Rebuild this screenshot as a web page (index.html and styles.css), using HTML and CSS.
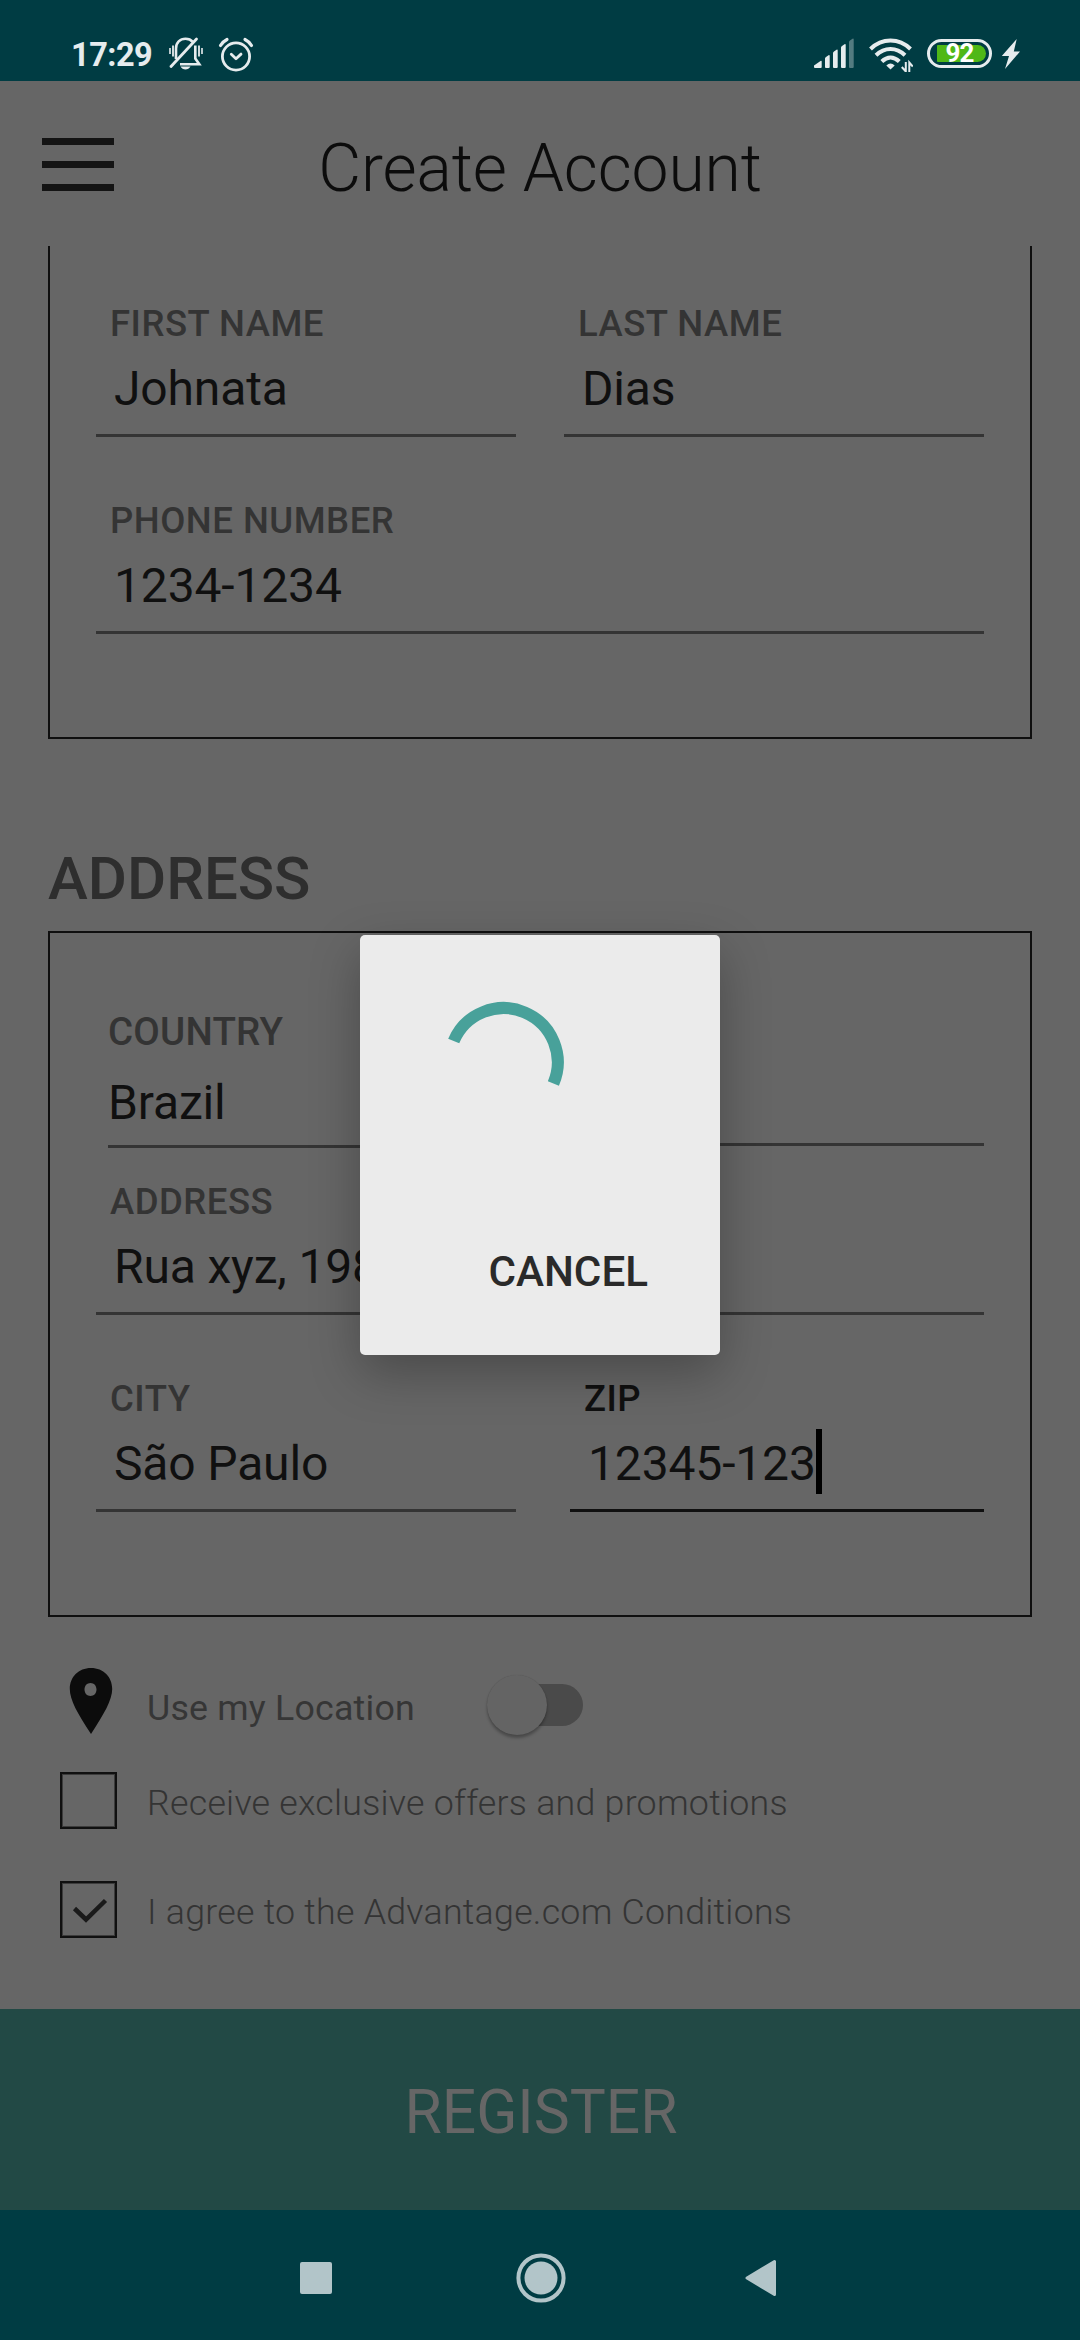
FILE: index.html
```html
<!DOCTYPE html>
<html lang="en">
<head>
<meta charset="utf-8">
<title>Create Account</title>
<link rel="stylesheet" href="styles.css">
</head>
<body>
<div class="screen">
  <header class="status-bar">
    <span class="clock">17:29</span>
    <svg class="icon-bell" width="36" height="34" viewBox="0 0 36 34" fill="none" stroke="#e6ecee" stroke-width="2.6">
      <path d="M8 23V12.500C8 6.500 12 2.800 17.500 2.800c3 0 5.500 1 7.200 3"/>
      <path d="M27.300 9.500v13l4 5.700H12"/>
      <path d="M3 30.500L28.500 3" stroke-width="2.800" stroke-linecap="round"/>
      <path d="M5 9.500v11M31 9.500v11" stroke-width="1.800"/>
      <path d="M2 12v6M34 12v6" stroke-width="1.600"/>
      <path d="M12.500 30.500h10c-1.200 2-3 3-5 3s-4-1-5-3z" fill="#e6ecee" stroke="none"/>
    </svg>
    <svg class="icon-alarm" width="36" height="36" viewBox="0 0 36 36" fill="none" stroke="#e6ecee" stroke-width="2.800" stroke-linecap="round" stroke-linejoin="round">
      <circle cx="18" cy="19.500" r="13.600"/>
      <path d="M13.300 17.300l4.700 4.400 5-4.600"/>
      <path d="M2.500 8.500C4 6 6 4 9 2.500M33.500 8.500C32 6 30 4 27 2.500" stroke-width="3.200"/>
    </svg>
    <svg class="icon-signal" width="41" height="30" viewBox="0 0 41 30" fill="#e6ecee">
      <path d="M1 27.500l6.500-4.500q1.200-.5 1.200.8V29q0 1-1 1H2q-1.500 0-1-2.500z"/>
      <path d="M12 20.500q0-1 1-1.500l2.500-1.800q1.200-.5 1.200.8V29q0 1-1 1H13q-1 0-1-1z"/>
      <path d="M20 15q0-1 1-1.500l2.500-1.800q1.200-.5 1.200.8V29q0 1-1 1H21q-1 0-1-1z"/>
      <path d="M28 9.500q0-1 1-1.500l2.500-1.800q1.200-.5 1.200.8V29q0 1-1 1H29q-1 0-1-1z"/>
      <path d="M36 4q0-1 1-1.500l2.500-1.800q1.200-.5 1.200.8V29q0 1-1 1H37q-1 0-1-1z" opacity=".36"/>
    </svg>
    <svg class="icon-wifi" width="44" height="34" viewBox="0 0 44 34" fill="none" stroke="#e6ecee" stroke-width="4">
      <path d="M1.500 11C13-.3 30-.3 41.500 11"/>
      <path d="M7 17.300c8.500-8.300 20.500-8.300 29 0"/>
      <path d="M12.800 23.500c5.500-5.300 12-5.300 17.500 0"/>
      <path d="M17.300 27.500q4.200-4 8.400 0L21.500 31.500z" fill="#e6ecee" stroke="none"/>
      <path d="M36.800 24v9.500l-4-4.500M40.300 34v-9.500l3.500 4" stroke-width="2"/>
    </svg>
    <div class="battery"><span class="battery-fill">92</span></div>
    <svg class="icon-bolt" width="20" height="32" viewBox="0 0 20 32" fill="#e6ecee">
      <path d="M15.700 1L.8 18h7.200L4 31 19 13.500h-6.200z"/>
    </svg>
  </header>

  <div class="title-bar">
    <div class="hamburger"><i></i><i></i><i></i></div>
    <h1>Create Account</h1>
  </div>

  <main class="form">
    <section class="panel panel-name">
      <div class="row">
        <div class="field"><label>FIRST NAME</label><div class="value">Johnata</div></div>
        <div class="field"><label>LAST NAME</label><div class="value">Dias</div></div>
      </div>
      <div class="row">
        <div class="field"><label>PHONE NUMBER</label><div class="value">1234-1234</div></div>
      </div>
    </section>

    <h2>ADDRESS</h2>
    <section class="panel panel-address">
      <div class="row row-country">
        <div class="field select"><label>COUNTRY</label><div class="value">Brazil</div></div>
        <div class="field empty"></div>
      </div>
      <div class="row">
        <div class="field"><label>ADDRESS</label><div class="value">Rua xyz, 198</div></div>
      </div>
      <div class="row">
        <div class="field"><label>CITY</label><div class="value">São Paulo</div></div>
        <div class="field focused"><label>ZIP</label><div class="value">12345-123<span class="caret"></span></div></div>
      </div>
    </section>

    <section class="options">
      <div class="location">
        <svg class="pin" width="44" height="68" viewBox="0 0 44 68">
          <path fill="#0c0c0c" fill-rule="evenodd" d="M22 0C9.500 0 .8 9 .8 21c0 11 8 25 21.200 45C35 46 43.200 32 43.200 21 43.200 9 34.500 0 22 0zm-.5 15c3.500 0 6 2.800 6 6.500s-2.500 6.500-6 6.500-6-2.800-6-6.500 2.500-6.500 6-6.500z"/>
        </svg>
        <span class="location-text">Use my Location</span>
        <div class="switch"><i class="thumb"></i></div>
      </div>
      <div class="check-row"><i class="box"></i><span class="offers">Receive exclusive offers and promotions</span></div>
      <div class="check-row"><i class="box"><svg width="53" height="53" viewBox="0 0 53 53" fill="none" stroke="#1a1a1a" stroke-width="4.500"><path d="M12.500 25.500L24 36.500 43.500 17.500"/></svg></i><span class="agree">I agree to the Advantage.com Conditions</span></div>
    </section>
  </main>

  <div class="register">REGISTER</div>

  <nav class="nav-bar">
    <svg width="32" height="32" viewBox="0 0 32 32"><rect width="32" height="32" rx="2" fill="#b2c5c9"/></svg>
    <svg class="nav-home" width="50" height="50" viewBox="0 0 50 50"><circle cx="25" cy="25" r="22.600" fill="none" stroke="#b2c5c9" stroke-width="4"/><circle cx="25" cy="25" r="16.500" fill="#b2c5c9"/></svg>
    <svg width="32" height="38" viewBox="0 0 32 38"><path d="M2 19L29.500 2.500v33z" fill="#b2c5c9" stroke="#b2c5c9" stroke-width="3" stroke-linejoin="round"/></svg>
  </nav>

  <div class="overlay">
    <div class="dialog">
      <svg class="spinner" width="120" height="120" viewBox="0 0 120 120" fill="none" stroke="#48a19a" stroke-width="12"><path d="M9.700 40A54 54 0 1 1 109.400 82.500"/></svg>
      <span class="cancel">CANCEL</span>
    </div>
  </div>
</div>
</body>
</html>
```
FILE: styles.css
```css
* { box-sizing: border-box; }
body { margin: 0; font-family: Roboto, sans-serif; background: #666; }
h1, h2 { margin: 0; }
svg { display: block; flex: none; }
.screen { position: relative; width: 1080px; height: 2340px; background: #666; overflow: hidden; display: flex; flex-direction: column; }

.status-bar { height: 81px; flex: none; background: #003c43; display: flex; align-items: flex-start; padding: 36px 59px 0 71px; color: #e6ecee; }
.clock { font-size: 32.500px; line-height: 38px; font-weight: 700; letter-spacing: -.5px; width: 97px; }
.icon-alarm { margin: 1px 0 0 14px; }
.icon-signal { margin: 2px 0 0 auto; }
.icon-wifi { margin: 2px 0 0 15px; }
.battery { margin: 3px 0 0 14px; width: 65px; height: 29px; flex: none; border: 3px solid #e6ecee; border-radius: 15px; padding: 3px 3px 3px 7px; }
.battery-fill { display: flex; align-items: center; justify-content: center; height: 17px; padding-right: 4px; border-radius: 1px 9px 9px 1px; background: #4fb817; color: #fff; font-size: 26px; font-weight: 700; line-height: 17px; letter-spacing: -1px; }
.icon-bolt { margin: 2px 0 0 9px; }

.title-bar { height: 165px; flex: none; display: grid; grid-template-columns: 72px 1fr 72px; padding: 0 42px; }
.hamburger { padding-top: 57px; display: flex; flex-direction: column; gap: 16px; }
.hamburger i { height: 7px; background: #141414; }
h1 { font-size: 66px; font-weight: 300; line-height: 80px; padding-top: 48px; text-align: center; letter-spacing: -.15px; color: #0c0c0c; }

.form { flex: none; height: 1763px; padding: 0 48px; }
.panel { border: 2px solid #0f0f0f; padding: 0 46px; display: flex; flex-direction: column; gap: 63px; }
.panel-name { border-top: 0; height: 493px; padding-top: 57px; }
.panel-address { height: 686px; padding-top: 76px; }
.row { display: grid; grid-auto-flow: column; grid-auto-columns: minmax(0, 1fr); gap: 48px; }
.field { height: 134px; border-bottom: 3px solid #343434; }
.field label { display: block; padding-left: 14px; font-size: 36.500px; line-height: 42px; font-weight: 500; letter-spacing: .5px; color: #343434; margin-bottom: 15px; }
.value { display: flex; align-items: center; padding-left: 18px; font-size: 48px; line-height: 58px; letter-spacing: -.15px; color: #101010; white-space: pre; }
.row-country { margin-bottom: -30px; height: 139px; }
.field.select { height: 139px; margin-left: 12px; }
.select label { padding-left: 0; font-size: 38.500px; line-height: 46px; letter-spacing: .2px; margin-bottom: 19px; }
.select .value { padding-left: 0; }
.field.empty { height: 137px; }
.field.focused { margin-left: 6px; border-color: #101010; }
.focused label { color: #101010; }
.caret { width: 6px; height: 65px; margin: -10px 0 -5px; background: #000; }
h2 { font-size: 60px; font-weight: 500; line-height: 72px; height: 192px; padding-top: 104px; color: #2e2e2e; }

.options { padding: 51px 12px 0; }
.location { display: flex; height: 68px; margin-left: 9px; }
.location-text { margin-left: 34px; width: 334px; padding-top: 19px; font-size: 35.750px; line-height: 42px; letter-spacing: .2px; color: #363636; white-space: nowrap; }
.switch { margin: 16px 0 0 22px; width: 80px; height: 42px; border-radius: 21px; background: #4a4a4a; }
.thumb { display: block; margin: -9px 0 0 -16px; width: 60px; height: 60px; border-radius: 50%; background: #646464; box-shadow: 0 3px 3px rgba(0,0,0,.28), 0 0 1px rgba(0,0,0,.2); }
.check-row { display: flex; margin-top: 52px; }
.location + .check-row { margin-top: 36px; }
.box { width: 57px; height: 57px; border: 2px solid #101010; box-shadow: inset 0 0 0 1px #3c3c3c; flex: none; }
.check-row span { margin-left: 30px; padding-top: 10px; font-size: 35.750px; font-weight: 300; line-height: 42px; letter-spacing: .25px; color: #343434; white-space: nowrap; }

.register { height: 201px; flex: none; background: #224945; color: #666; font-size: 60.500px; line-height: 208px; text-align: center; padding-left: 2px; }
.nav-bar { height: 130px; flex: none; background: #003c43; display: flex; align-items: center; justify-content: space-between; padding: 6px 303px 0 300px; }
.nav-home { margin-left: 4px; }

.overlay { position: absolute; inset: 80px 0 130px; display: flex; align-items: center; justify-content: center; }
.dialog { width: 360px; height: 420px; border-radius: 5px; background: #ebebeb; box-shadow: 0 18px 50px rgba(0,0,0,.28); padding: 66px 72px 0 84px; display: flex; flex-direction: column; }
.cancel { margin-top: 126px; align-self: flex-end; font-size: 42.200px; line-height: 50px; font-weight: 500; color: #2a2a2a; }
```
